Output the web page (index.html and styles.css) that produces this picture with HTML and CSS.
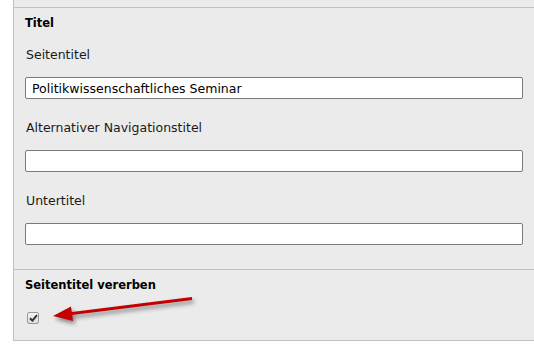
FILE: index.html
```html
<!DOCTYPE html>
<html lang="de">
  <head>
    <meta charset="UTF-8" />
    <meta name="viewport" content="width=device-width, initial-scale=1.0" />
    <title>Seiteneigenschaften</title>
    <link rel="stylesheet" href="styles.css">
  </head>
  <body>
    <div id="panel">
      <div class="section">
        <h3 class="section-title">Titel</h3>
        <div class="field first">
          <label class="field-label" for="title">Seitentitel</label>
          <input class="field-input" id="title" type="text" value="Politikwissenschaftliches Seminar" />
        </div>
        <div class="field">
          <label class="field-label" for="nav-title">Alternativer Navigationstitel</label>
          <input class="field-input" id="nav-title" type="text" />
        </div>
        <div class="field">
          <label class="field-label" for="subtitle">Untertitel</label>
          <input class="field-input" id="subtitle" type="text" />
        </div>
      </div>
      <div class="section section-inherit">
        <h3 class="section-title">Seitentitel vererben</h3>
        <span class="checkbox" role="checkbox" aria-checked="true" aria-disabled="true">
          <svg width="9" height="8" viewBox="0 0 9 8">
            <path d="M1 4.2 L3.4 6.6 L8 1.2" fill="none" stroke="#333" stroke-width="2" />
          </svg>
        </span>
        <!-- roter Hinweispfeil auf die Checkbox -->
        <svg class="arrow" width="180" height="50" viewBox="0 0 180 50">
          <g transform="translate(-40 -290)">
            <line x1="192" y1="299.5" x2="68" y2="315" stroke="#c40000" stroke-width="3" />
            <polygon points="53,317 71,307.5 73,322" fill="#c40000" />
          </g>
        </svg>
      </div>
    </div>
  </body>
</html>
```

FILE: styles.css
```css
* {
  margin: 0;
  padding: 0;
  box-sizing: border-box;
}
body {
  background-color: #fff;
  font-family: "DejaVu Sans", Verdana, sans-serif;
  font-size: 12.5px;
  color: #1a1a1a;
}
#panel {
  margin-left: 13px;
  padding-top: 7px;
  background-color: #ebebeb;
  border-left: 1px solid #c0c0c0;
  border-bottom: 1px solid #c0c0c0;
}
.section {
  border-top: 1px solid #c0c0c0;
  padding: 7px 11px 24px 11px;
}
.section-title {
  font-size: 11.5px;
  font-weight: bold;
  line-height: 16px;
  color: #000;
}
.field {
  display: flex;
  flex-direction: column;
  margin-top: 21px;
}
.field.first {
  margin-top: 16px;
}
.field-label {
  line-height: 16px;
  margin-bottom: 14px;
  padding-left: 1px;
}
.field-input {
  width: 100%;
  height: 22px;
  border: 1px solid #7a7a7a;
  border-radius: 2px;
  background-color: #fff;
  padding: 0 6px;
  font-family: "DejaVu Sans", Verdana, sans-serif;
  font-size: 12.5px;
  color: #000;
  outline: none;
}
.section-inherit {
  position: relative;
  padding-bottom: 16px;
}
.checkbox {
  display: flex;
  justify-content: center;
  align-items: center;
  width: 12px;
  height: 12px;
  margin: 19px 0 0 2px;
  border: 1px solid #9a9a9a;
  border-radius: 2px;
  background: linear-gradient(#f4f4f4, #dcdcdc);
}
.arrow {
  position: absolute;
  left: 26px;
  top: 19px;
  filter: drop-shadow(2px 3px 2px rgba(0, 0, 0, 0.45));
}
```
